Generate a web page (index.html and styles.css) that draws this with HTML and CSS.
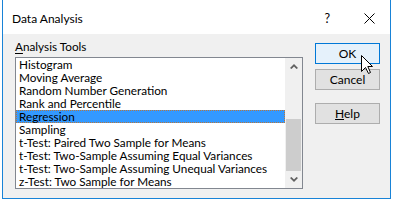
FILE: index.html
```html
<!DOCTYPE html>
<html>
<head>
<meta charset="utf-8">
<link rel="stylesheet" href="styles.css">
</head>
<body>
<div class="window">
  <div class="titlebar">
    <span class="title">Data Analysis</span>
    <div class="title-btns">
      <span class="help-q">?</span>
      <svg class="close-x" width="11" height="11" viewBox="0 0 11 11"><path d="M0.5 0.5 L10.5 10.5 M10.5 0.5 L0.5 10.5" stroke="#000" stroke-width="1" fill="none"/></svg>
    </div>
  </div>
  <div class="client">
    <div class="left">
      <div class="label"><u>A</u>nalysis Tools</div>
      <div class="listbox">
        <ul class="items">
          <li>Histogram</li>
          <li>Moving Average</li>
          <li>Random Number Generation</li>
          <li>Rank and Percentile</li>
          <li class="selected">Regression</li>
          <li>Sampling</li>
          <li>t-Test: Paired Two Sample for Means</li>
          <li>t-Test: Two-Sample Assuming Equal Variances</li>
          <li>t-Test: Two-Sample Assuming Unequal Variances</li>
          <li>z-Test: Two Sample for Means</li>
        </ul>
        <div class="scrollbar">
          <div class="sb-btn"><svg width="8" height="5" viewBox="0 0 8 5"><path d="M0 4 L4 0 L8 4 L6.5 5 L4 2.5 L1.5 5 Z" fill="#606060"/></svg></div>
          <div class="sb-track"><div class="sb-thumb"></div></div>
          <div class="sb-btn"><svg width="8" height="5" viewBox="0 0 8 5"><path d="M0 1 L4 5 L8 1 L6.5 0 L4 2.5 L1.5 0 Z" fill="#606060"/></svg></div>
        </div>
      </div>
    </div>
    <div class="buttons">
      <div class="btn default">OK</div>
      <div class="btn">Cancel</div>
      <div class="btn help"><u>H</u>elp</div>
    </div>
  </div>
  <svg class="cursor" width="13" height="20" viewBox="0 0 13 20"><path d="M0.5 0.5 L0.5 16.5 L4.5 12.5 L7.5 18.5 L9.5 17.5 L6.8 11.5 L11.5 11.5 Z" fill="#fff" stroke="#000" stroke-width="1" stroke-linejoin="miter"/></svg>
</div>
</body>
</html>
```

FILE: styles.css
```css
html, body {
  margin: 0;
  padding: 0;
  background: #ffffff;
}
body {
  width: 400px;
  height: 203px;
  overflow: hidden;
  font-family: Lato, "Noto Sans", sans-serif;
  font-size: 11.75px;
  color: #000;
}
.window {
  position: relative;
  box-sizing: border-box;
  margin: -1px 0 0 2px;
  width: 389px;
  height: 200px;
  border: 1px solid #1883d7;
  background: #f0f0f0;
  display: flex;
  flex-direction: column;
}
.titlebar {
  height: 34px;
  background: #ffffff;
  display: flex;
  align-items: center;
  justify-content: space-between;
  padding-left: 9px;
  padding-right: 15px;
  flex-shrink: 0;
}
.title {
  font-size: 12px;
  margin-top: 2px;
}
.title-btns {
  display: flex;
  align-items: center;
  gap: 34px;
  margin-top: 2px;
}
.help-q {
  font-size: 12.5px;
}
.close-x {
  display: block;
}
.client {
  flex: 1;
  display: flex;
  padding: 0 10px 0 12px;
}
.left {
  display: flex;
  flex-direction: column;
  width: 288px;
}
.label {
  height: 23px;
  line-height: 16px;
  padding-top: 5px;
  box-sizing: border-box;
}
.label u {
  text-underline-offset: 2px;
}
.listbox {
  display: flex;
  width: 288px;
  height: 132px;
  box-sizing: border-box;
  border: 1px solid #828790;
  background: #fff;
}
.items {
  list-style: none;
  margin: 0;
  padding: 0;
  flex: 1;
}
.items li {
  height: 13px;
  line-height: 13px;
  padding-left: 3px;
  white-space: nowrap;
}
.items li.selected {
  background:
    repeating-linear-gradient(90deg, #b8763a 0 1px, #3399ff 1px 2px) top left / 100% 1px no-repeat,
    repeating-linear-gradient(90deg, #b8763a 0 1px, #3399ff 1px 2px) bottom left / 100% 1px no-repeat,
    repeating-linear-gradient(180deg, #b8763a 0 1px, #3399ff 1px 2px) top left / 1px 100% no-repeat,
    repeating-linear-gradient(180deg, #b8763a 0 1px, #3399ff 1px 2px) top right / 1px 100% no-repeat,
    #3399ff;
}
.scrollbar {
  width: 17px;
  display: flex;
  flex-direction: column;
  background: #f0f0f0;
}
.sb-btn {
  height: 17px;
  display: flex;
  align-items: center;
  justify-content: center;
}
.sb-track {
  flex: 1;
  display: flex;
  flex-direction: column;
  justify-content: flex-end;
  align-items: center;
}
.sb-thumb {
  width: 15px;
  height: 52px;
  background: #cdcdcd;
}
.buttons {
  margin-left: 12px;
  padding-top: 9px;
  display: flex;
  flex-direction: column;
  width: 65px;
}
.btn {
  box-sizing: border-box;
  height: 21px;
  line-height: 19px;
  text-align: center;
  border: 1px solid #adadad;
  background: #e1e1e1;
  margin-bottom: 5px;
  font-size: 12px;
}
.btn.default {
  border-color: #0078d7;
  background: #e5f1fb;
}
.btn.help {
  margin-top: 8px;
}
.cursor {
  position: absolute;
  left: 358px;
  top: 55px;
}
```
